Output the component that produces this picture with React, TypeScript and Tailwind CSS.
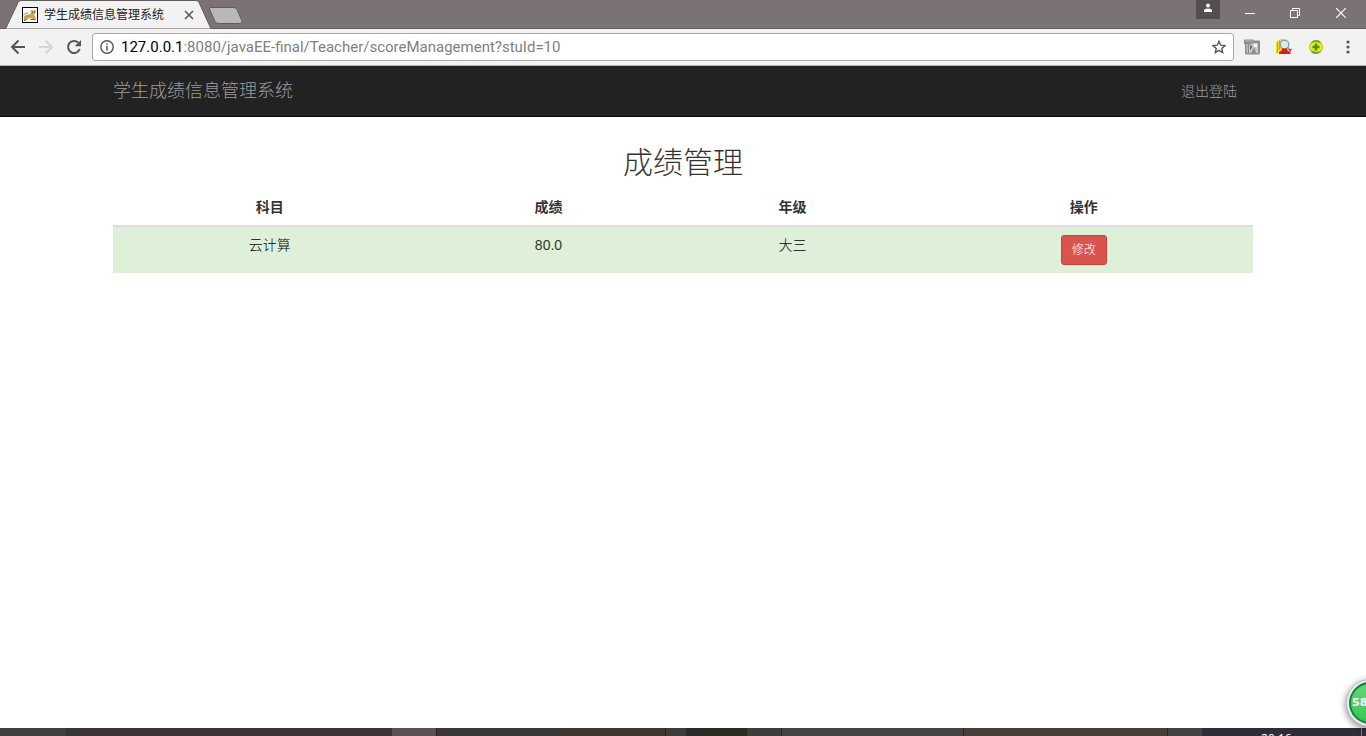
import type { ReactNode } from "react";

type Score = { subject: string; score: string; grade: string };

const scores: Score[] = [{ subject: "云计算", score: "80.0", grade: "大三" }];

function TabStrip() {
  return (
    <header className="relative flex h-[29px] shrink-0 items-start bg-[#7b7373] shadow-[inset_0_-1px_0_#625b5b]">
      <div className="relative h-[29px] w-[212px]">
        <svg className="absolute inset-0" width="212" height="29" viewBox="0 0 212 29" aria-hidden="true">
          <path d="M5.500 29 L18 2.500 Q19 .5 21 .5 H196 Q198 .5 199 2.500 L211 29Z" fill="#f2f2f2" stroke="#625b5b" />
        </svg>
        <div className="relative flex h-[29px] items-center pl-[22px]">
          <svg width="16" height="16" viewBox="0 0 16 16" aria-hidden="true">
            <rect x=".5" y=".5" width="15" height="15" fill="#fdfbf4" stroke="#000" />
            <path d="M2 9.500Q4 7 8 7.500L9 5 8.500 2.500 10 3.500H12.500L14 2.500 13.500 6 12 7.500 13.500 10.500 14 12H11L9 11 5 12 2 13.500Z" fill="#d2a54c" />
            <path d="M1.500 8Q3 6 6 6M3 10q2-2 4-1" fill="none" stroke="#8f8f8f" />
            <path d="M8.500 12.500h5M2 13.500l3-1" stroke="#6d5a35" />
            <path d="M10 5h1M12 5h1" stroke="#4a3a1c" />
          </svg>
          <span className="ml-[6px] text-xs text-[#222]">学生成绩信息管理系统</span>
          <button type="button" aria-label="关闭标签页" className="ml-5">
            <svg width="10" height="10" viewBox="0 0 10 10" stroke="#5a5a5a" strokeWidth="1.600">
              <path d="M1 1l8 8M9 1l-8 8" />
            </svg>
          </button>
        </div>
      </div>
      <button type="button" aria-label="新标签页" className="-ml-1 mt-[7px]">
        <svg width="36" height="17" viewBox="0 0 36 17">
          <path d="M3 .5 H26 Q28 .5 29 2.500 L34 14 Q34.500 16.500 32 16.500 H10 Q8 16.500 7 14.500 L1.500 2 Q1 .5 3 .5Z" fill="#b9b7b7" stroke="#625b5b" />
        </svg>
      </button>
      <div className="ml-auto flex h-[28px] items-start">
        <button type="button" aria-label="用户" className="flex h-[19px] w-6 items-start justify-center bg-[#544e4e] pt-[3px]">
          <svg width="10" height="10" viewBox="0 0 10 10" fill="#fff">
            <circle cx="5" cy="2.500" r="2" />
            <path d="M1 9V7.500Q1 5.500 5 5.500T9 7.500V9Z" />
          </svg>
        </button>
        <button type="button" aria-label="最小化" className="ml-[7px] flex h-[26px] w-[46px] items-center justify-center">
          <svg width="10" height="10" viewBox="0 0 10 10" stroke="#fff">
            <path d="M0 5.500h10" />
          </svg>
        </button>
        <button type="button" aria-label="还原" className="flex h-[26px] w-[45px] items-center justify-center">
          <svg width="11" height="10" viewBox="0 0 11 10" fill="none" stroke="#fff">
            <path d="M.5 2.500h7v7h-7zM2.500 2.500V.5h7v7H7.500" />
          </svg>
        </button>
        <button type="button" aria-label="关闭" className="mr-[2px] flex h-[26px] w-[46px] items-center justify-center">
          <svg width="10" height="10" viewBox="0 0 10 10" stroke="#fff" strokeWidth="1.200">
            <path d="M0 0l10 10M10 0L0 10" />
          </svg>
        </button>
      </div>
    </header>
  );
}

function ToolButton({ label, children }: { label: string; children: ReactNode }) {
  return (
    <button type="button" aria-label={label} className="flex size-4 shrink-0 items-center justify-center">
      {children}
    </button>
  );
}

function Toolbar() {
  return (
    <div className="flex h-[37px] shrink-0 items-center border-b border-[#b5b5b5] bg-[#f2f2f2] px-[10px]">
      <div className="flex gap-3">
        <ToolButton label="后退">
          <svg width="16" height="16" viewBox="0 0 16 16" fill="none" stroke="#555" strokeWidth="2">
            <path d="M15 8H2.500M8.500 1.500 2 8l6.500 6.500" />
          </svg>
        </ToolButton>
        <ToolButton label="前进">
          <svg width="16" height="16" viewBox="0 0 16 16" fill="none" stroke="#d5d5d5" strokeWidth="2">
            <path d="M1 8h12.500M7.500 1.500 14 8l-6.500 6.500" />
          </svg>
        </ToolButton>
        <ToolButton label="重新加载">
          <svg width="16" height="16" viewBox="0 0 16 16">
            <path d="M13.700 10A6 6 0 1 1 12.300 3.800" fill="none" stroke="#555" strokeWidth="2" />
            <path d="M15 1v6.300H8.700Z" fill="#555" />
          </svg>
        </ToolButton>
      </div>
      <div className="ml-[10px] flex h-7 grow items-center rounded-[3px] border border-[#a9a9a9] bg-white px-[7px]">
        <svg className="shrink-0" width="14" height="14" viewBox="0 0 14 14" aria-hidden="true">
          <circle cx="7" cy="7" r="6.200" fill="none" stroke="#555" strokeWidth="1.400" />
          <path d="M7 6v4.500M7 3.300v1.500" stroke="#555" strokeWidth="1.500" />
        </svg>
        <a href="#" className="ml-[7px] grow font-['Roboto','Noto_Sans_CJK_SC',sans-serif] text-[15px] leading-5 text-[#808080]">
          <span className="text-black">127.0.0.1</span>:8080/javaEE-final/Teacher/scoreManagement?stuId=10
        </a>
        <button type="button" aria-label="收藏">
          <svg width="14" height="14" viewBox="0 0 14 14" fill="none" stroke="#555" strokeWidth="1.400">
            <path d="M7 1.300 8.700 5.200 13 5.600 9.800 8.400 10.700 12.600 7 10.400 3.300 12.600 4.200 8.400 1 5.600 5.300 5.200Z" />
          </svg>
        </button>
      </div>
      <div className="ml-[10px] flex gap-4">
        <ToolButton label="扩展程序">
          <svg width="16" height="16" viewBox="0 0 16 16">
            <path d="M0 1.500Q0 .5 1 .5H9L10 1.500H15Q16 1.500 16 2.500V14Q16 15.500 14.500 15.500H2Q1 15.500 1 14V5H0Z" fill="#8d8d8d" />
            <path d="M1 1.500h8v1H1zM2.500 5h1.500v9H2.500z" fill="#bcbcbc" />
            <path d="M5 6 9 4H14V14H12L10.500 8 7 14H5Z" fill="#c9c9c9" />
            <path d="M10 5h3v3h-3z" fill="#f4f4f4" />
            <path d="M6 7l2-1v3l-2 2Z" fill="#6a6a6a" />
          </svg>
        </ToolButton>
        <ToolButton label="搜索扩展">
          <svg className="shrink-0" width="16" height="16" viewBox="0 0 16 16">
            <path d="M0 3 4 0H9V13L0 14.500Z" fill="#f6dc22" />
            <path d="M1.500 3v11M3.500 1.500v9" stroke="#d7a012" />
            <circle cx="8.500" cy="5.500" r="4.300" fill="#d6ecef" stroke="#7da3a6" strokeWidth="1.300" />
            <path d="M11.500 8.500l3 3" stroke="#d58f68" strokeWidth="2" />
            <path d="M6 9.500h5l.5 2 3 1.500v2H3v-2l2.500-1.500Z" fill="#e01b22" />
            <path d="M12.500 10.500 16 9.500 14.500 13Z" fill="#b55045" />
          </svg>
        </ToolButton>
        <ToolButton label="安全扩展">
          <svg width="16" height="16" viewBox="0 0 16 16">
            <circle cx="8" cy="8" r="7" fill="#f6e610" />
            <path d="M2 5Q5 0 10 1.200L12.500 2.200V4.500Q7 1.500 2 5ZM14 11Q11 16 6 14.800L3.500 13.800V11.500Q9 14.500 14 11Z" fill="#5da450" />
            <path d="M13 4q2.500 3 1 7M3 12Q.5 9 2 5" fill="none" stroke="#b5cd2b" />
            <path d="M8 4.500v7M4.500 8h7" stroke="#3b9636" strokeWidth="2.600" />
          </svg>
        </ToolButton>
        <ToolButton label="菜单">
          <svg width="4" height="14" viewBox="0 0 4 14" fill="#555">
            <circle cx="2" cy="2" r="1.600" />
            <circle cx="2" cy="7" r="1.600" />
            <circle cx="2" cy="12" r="1.600" />
          </svg>
        </ToolButton>
      </div>
    </div>
  );
}

function Navbar() {
  return (
    <nav className="shrink-0 border-b border-[#080808] bg-[#222]">
      <div className="mx-auto flex h-[50px] w-full max-w-[1170px] items-center justify-between px-[15px] text-[#9d9d9d]">
        <a href="#" className="text-lg font-light">学生成绩信息管理系统</a>
        <a href="#" className="px-4 text-sm font-light">退出登陆</a>
      </div>
    </nav>
  );
}

function ScoreTable() {
  return (
    <table className="w-full table-fixed text-center text-sm leading-5 text-[#333]">
      <colgroup>
        <col className="w-[27.5%]" />
        <col className="w-[21.4%]" />
        <col className="w-[21.4%]" />
        <col />
      </colgroup>
      <thead>
        <tr className="border-b-2 border-[#ddd]">
          <th className="p-2">科目</th>
          <th className="p-2">成绩</th>
          <th className="p-2">年级</th>
          <th className="p-2">操作</th>
        </tr>
      </thead>
      <tbody>
        {scores.map((row) => (
          <tr key={row.subject} className="bg-[#dff0d8] align-top">
            <td className="p-2 font-light text-black">{row.subject}</td>
            <td className="p-2">{row.score}</td>
            <td className="p-2 font-light text-black">{row.grade}</td>
            <td className="p-2">
              <button type="button" className="mx-auto block h-[30px] rounded-[3px] border border-[#d43f3a] bg-[#d9534f] px-[10px] text-xs font-light text-white">
                修改
              </button>
            </td>
          </tr>
        ))}
      </tbody>
    </table>
  );
}

function Taskbar() {
  return (
    <footer className="relative flex h-2 shrink-0 overflow-hidden bg-[#3a3534]">
      <div className="w-[4.800%] bg-[#40403e]" />
      <div className="w-[23.900%] bg-[#3a3534]" />
      <div className="w-[3.200%] bg-[#5b5353]" />
      <div className="w-[9.500%] border-l border-[#222] bg-[#3a3736]" />
      <div className="w-[7.300%] bg-[#3f3630]" />
      <div className="w-[1.500%] border-l border-[#292424] bg-[#403b3b]" />
      <div className="w-[4.500%] bg-[#292b24]" />
      <div className="w-[2.500%] bg-[#3e3d3d]" />
      <div className="w-[13.300%] border-l border-[#292626] bg-[#454344]" />
      <div className="w-[14.900%] border-l border-[#292626] bg-[#463f39]" />
      <div className="w-[2.600%] border-l border-[#292626] bg-[#444340]" />
      <div className="flex grow justify-between bg-[#302d3a] pr-1 pl-[59px]">
        <time className="mt-[3px] font-['Open_Sans',sans-serif] text-xs leading-4 text-white">20:16</time>
        <span className="h-2 w-px bg-[#85838a]" />
      </div>
    </footer>
  );
}

export default function App() {
  return (
    <div className="relative flex min-h-screen flex-col overflow-hidden bg-white font-['Liberation_Sans','Noto_Sans_CJK_SC',sans-serif]">
      <TabStrip />
      <Toolbar />
      <Navbar />
      <main className="mx-auto w-full max-w-[1170px] grow px-[15px] pt-7">
        <h1 className="mb-2 text-center text-3xl leading-9 font-light text-[#333]">成绩管理</h1>
        <ScoreTable />
      </main>
      <Taskbar />
      <div className="absolute -right-7 bottom-[9px] flex size-12 items-center rounded-full border border-[#bdbdbd] bg-[#eee] p-[2px] shadow-[0_2px_7px_rgba(0,0,0,0.5)]">
        <div className="flex size-full items-center rounded-full border-2 border-[#15843f] bg-linear-to-b from-[#63d579] to-[#35c553] pl-px font-['DejaVu_Sans',sans-serif] text-[11px] font-bold text-white">
          58
        </div>
      </div>
    </div>
  );
}
